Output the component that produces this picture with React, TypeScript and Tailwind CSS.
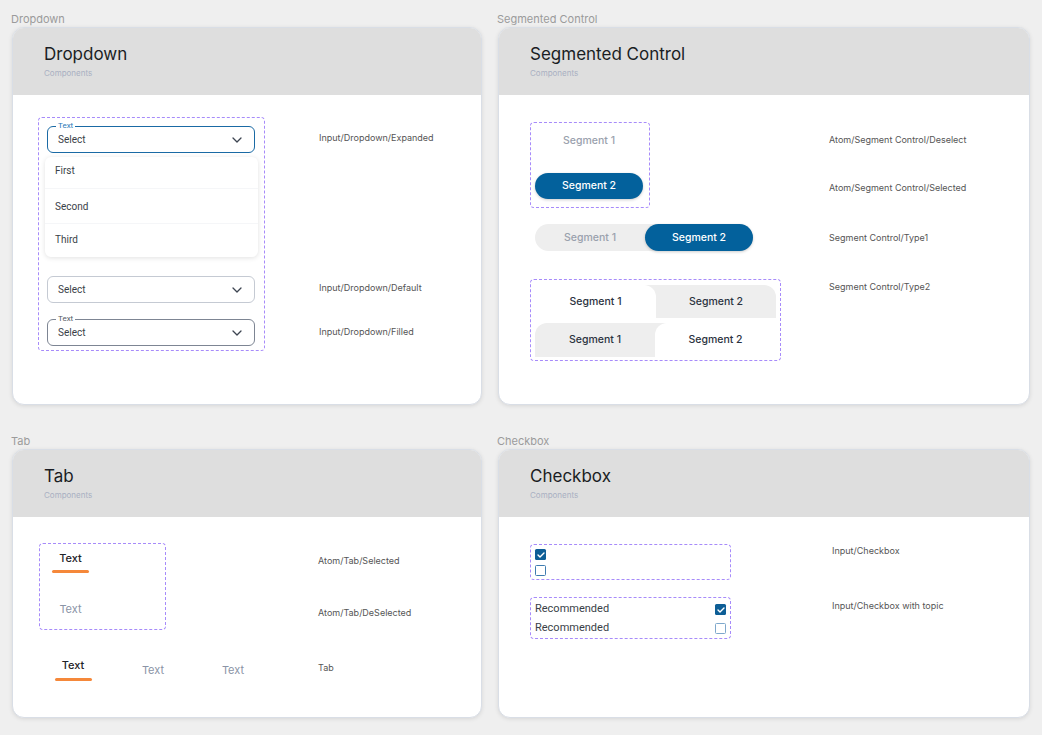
import React from 'react';

const inter = 'font-["Inter","Liberation_Sans",sans-serif]';
const roboto = 'font-["Roboto","Liberation_Sans",sans-serif]';

function Chevron() {
  return (
    <svg width="10" height="6" viewBox="0 0 10 6" fill="none">
      <path d="M1 1l4 4 4-4" stroke="#3d4451" strokeWidth="1.3" strokeLinecap="round" strokeLinejoin="round" />
    </svg>
  );
}

function Card({ title, height, children }: { title: string; height: string; children: React.ReactNode }) {
  return (
    <div className={`${height} rounded-[12px] border border-[#d9dee6] bg-white overflow-hidden shadow-[0_1px_4px_rgba(0,0,0,0.10)]`}>
      <div className="h-[67px] bg-[#dedede] pl-[31px] pt-[16px]">
        <div className={`${inter} text-[17px] leading-[20px] font-normal text-[#1a1d23]`}>{title}</div>
        <div className={`${inter} text-[8px] leading-[10px] mt-[4px] text-[#a9b0c2]`}>Components</div>
      </div>
      {children}
    </div>
  );
}

function Label({ text, className = '' }: { text: string; className?: string }) {
  return <div className={`${inter} text-[9px] leading-[12px] text-[#555] whitespace-nowrap ${className}`}>{text}</div>;
}

function Select({ variant }: { variant: 'expanded' | 'default' | 'filled' }) {
  const border =
    variant === 'expanded' ? 'border-[1.5px] border-[#1a6aa5]' : variant === 'filled' ? 'border border-[#7d8593]' : 'border border-[#c5cad3]';
  return (
    <div className={`relative h-[27px] w-[208px] rounded-[6px] ${border} flex items-center justify-between pl-[10px] pr-[12px]`}>
      {variant !== 'default' && (
        <span
          className={`${roboto} absolute -top-[6px] left-[8px] bg-white px-[2px] text-[8px] leading-[9px] ${
            variant === 'expanded' ? 'text-[#2a7ab8]' : 'text-[#555b66]'
          }`}
        >
          Text
        </span>
      )}
      <span className={`${roboto} text-[10px] text-[#3a3f48]`}>Select</span>
      <Chevron />
    </div>
  );
}

function DropdownBody() {
  return (
    <div className="flex pl-[25px] pt-[22px]">
      <div className="w-[227px] h-[234px] rounded-[4px] border border-dashed border-[#a78bfa] px-[8px] pt-[8px]">
        <Select variant="expanded" />
        <div className={`${roboto} mt-[4px] -mx-[2px] h-[100px] rounded-[6px] bg-white shadow-[0_1px_5px_rgba(0,0,0,0.12)] text-[10px] text-[#3a3f48]`}>
          <div className="h-[32px] pl-[10px] pt-[8px] leading-[12px] border-b border-[#f5f6f8]">First</div>
          <div className="h-[35px] pl-[10px] pt-[12px] leading-[12px] border-b border-[#f5f6f8]">Second</div>
          <div className="h-[33px] pl-[10px] pt-[10px] leading-[12px]">Third</div>
        </div>
        <div className="mt-[19px]">
          <Select variant="default" />
        </div>
        <div className="mt-[16px]">
          <Select variant="filled" />
        </div>
      </div>
      <div className="ml-[54px] flex flex-col">
        <Label text="Input/Dropdown/Expanded" className="mt-[15px]" />
        <Label text="Input/Dropdown/Default" className="mt-[138px]" />
        <Label text="Input/Dropdown/Filled" className="mt-[32px]" />
      </div>
    </div>
  );
}

function SegmentedBody() {
  const seg = `${inter} text-[10.5px] font-medium leading-[14px]`;
  return (
    <div className="flex pl-[31px] pt-[27px]">
      <div className="flex flex-col items-start w-[251px]">
        <div className="w-[120px] h-[86px] rounded-[4px] border border-dashed border-[#a78bfa] pl-[4px] pt-[11px]">
          <div className={`${seg} w-[108px] text-center text-[#9aa1ad]`}>Segment 1</div>
          <div className={`${seg} mt-[25px] w-[108px] h-[26px] rounded-full bg-[#03619c] text-white flex items-center justify-center shadow-[0_1px_3px_rgba(0,0,0,0.2)]`}>
            Segment 2
          </div>
        </div>
        <div className="mt-[16px] ml-[5px] w-[218px] h-[27px] rounded-full bg-[#eeeeee] flex">
          <div className={`${seg} flex-1 flex items-center justify-center text-[#9aa1ad]`}>Segment 1</div>
          <div className={`${seg} w-[108px] rounded-full bg-[#03619c] text-white flex items-center justify-center shadow-[0_1px_3px_rgba(0,0,0,0.2)]`}>
            Segment 2
          </div>
        </div>
        <div className="mt-[28px] w-[251px] h-[82px] rounded-[4px] border border-dashed border-[#a78bfa] pl-[4px] pt-[5px]">
          <div className="flex h-[33px]">
            <div className={`${seg} relative z-10 w-[121px] rounded-tr-[12px] bg-white flex items-center justify-center text-[#2b3240]`}>Segment 1</div>
            <div className={`${seg} -ml-[13px] w-[133px] pl-[13px] rounded-tr-[12px] bg-[#eeeeee] flex items-center justify-center text-[#2b3240]`}>Segment 2</div>
          </div>
          <div className="flex h-[34px] mt-[5px]">
            <div className={`${seg} w-[133px] pr-[13px] rounded-tl-[12px] bg-[#eeeeee] flex items-center justify-center text-[#2b3240]`}>Segment 1</div>
            <div className={`${seg} relative z-10 -ml-[13px] w-[121px] rounded-tl-[12px] bg-white flex items-center justify-center text-[#2b3240]`}>Segment 2</div>
          </div>
        </div>
      </div>
      <div className="ml-[48px] flex flex-col">
        <Label text="Atom/Segment Control/Deselect" className="mt-[12px]" />
        <Label text="Atom/Segment Control/Selected" className="mt-[36px]" />
        <Label text="Segment Control/Type1" className="mt-[38px]" />
        <Label text="Segment Control/Type2" className="mt-[37px]" />
      </div>
    </div>
  );
}

function TabBody() {
  const t = `${inter} text-[11px] leading-[14px]`;
  return (
    <div className="pl-[20px] pt-[26px]">
      <div className="flex">
        <div className="ml-[6px] w-[127px] h-[87px] rounded-[4px] border border-dashed border-[#a78bfa] pl-[12px] pt-[7px]">
          <div className="w-[37px] flex flex-col items-center">
            <div className={`${t} font-medium text-[#1f2329]`}>Text</div>
            <div className="mt-[5px] h-[3px] w-[37px] rounded-full bg-[#f5883a]" />
            <div className={`${t} mt-[29px] text-[#8a94a6]`}>Text</div>
          </div>
        </div>
        <div className="ml-[152px] flex flex-col">
          <Label text="Atom/Tab/Selected" className="mt-[12px]" />
          <Label text="Atom/Tab/DeSelected" className="mt-[40px]" />
        </div>
      </div>
      <div className="flex mt-[28px]">
        <div className="w-[80px] flex flex-col items-center">
          <div className={`${t} font-medium text-[#1f2329]`}>Text</div>
          <div className="mt-[6px] h-[3px] w-[37px] rounded-full bg-[#f5883a]" />
        </div>
        <div className="w-[80px] flex flex-col items-center pt-[5px]">
          <div className={`${t} text-[#8a94a6]`}>Text</div>
        </div>
        <div className="w-[80px] flex flex-col items-center pt-[5px]">
          <div className={`${t} text-[#8a94a6]`}>Text</div>
        </div>
        <Label text="Tab" className="ml-[45px] mt-[4px]" />
      </div>
    </div>
  );
}

function Check({ checked, light = false }: { checked: boolean; light?: boolean }) {
  if (checked) {
    return (
      <div className="w-[11px] h-[11px] rounded-[1.5px] bg-[#0d5e96] flex items-center justify-center">
        <svg width="8" height="6" viewBox="0 0 8 6" fill="none">
          <path d="M1 3l2 2 4-4" stroke="white" strokeWidth="1.4" strokeLinecap="round" strokeLinejoin="round" />
        </svg>
      </div>
    );
  }
  return <div className={`w-[11px] h-[11px] rounded-[1.5px] border bg-white ${light ? 'border-[#7ea8cc]' : 'border-[#3f7cb0]'}`} />;
}

function CheckboxBody() {
  const r = `${roboto} text-[11px] text-[#3a3f48]`;
  return (
    <div className="pl-[31px] pt-[27px]">
      <div className="flex">
        <div className="w-[201px] h-[36px] rounded-[4px] border border-dashed border-[#a78bfa] pl-[4px] pt-[4px]">
          <Check checked />
          <div className="mt-[5px]">
            <Check checked={false} />
          </div>
        </div>
        <Label text="Input/Checkbox" className="ml-[101px] mt-[1px]" />
      </div>
      <div className="flex mt-[17px]">
        <div className="w-[201px] h-[42px] rounded-[4px] border border-dashed border-[#a78bfa] px-[4px] pt-[2px]">
          <div className="h-[19px] flex items-center justify-between">
            <span className={r}>Recommended</span>
            <Check checked />
          </div>
          <div className="h-[19px] flex items-center justify-between">
            <span className={r}>Recommended</span>
            <Check checked={false} light />
          </div>
        </div>
        <Label text="Input/Checkbox with topic" className="ml-[101px] mt-[3px]" />
      </div>
    </div>
  );
}

function Section({ label, children }: { label: string; children: React.ReactNode }) {
  return (
    <div>
      <div className={`${inter} text-[11px] leading-[14px] mb-[1px] -ml-px text-[#9b9b9b]`}>{label}</div>
      {children}
    </div>
  );
}

export default function App() {
  return (
    <div className="w-[1042px] h-[735px] bg-[#efefef] pl-[12px] pt-[12px] overflow-hidden">
      <div className="grid grid-cols-[470px_532px] gap-x-[16px] gap-y-[29px]">
        <Section label="Dropdown">
          <Card title="Dropdown" height="h-[378px]">
            <DropdownBody />
          </Card>
        </Section>
        <Section label="Segmented Control">
          <Card title="Segmented Control" height="h-[378px]">
            <SegmentedBody />
          </Card>
        </Section>
        <Section label="Tab">
          <Card title="Tab" height="h-[269px]">
            <TabBody />
          </Card>
        </Section>
        <Section label="Checkbox">
          <Card title="Checkbox" height="h-[269px]">
            <CheckboxBody />
          </Card>
        </Section>
      </div>
    </div>
  );
}
